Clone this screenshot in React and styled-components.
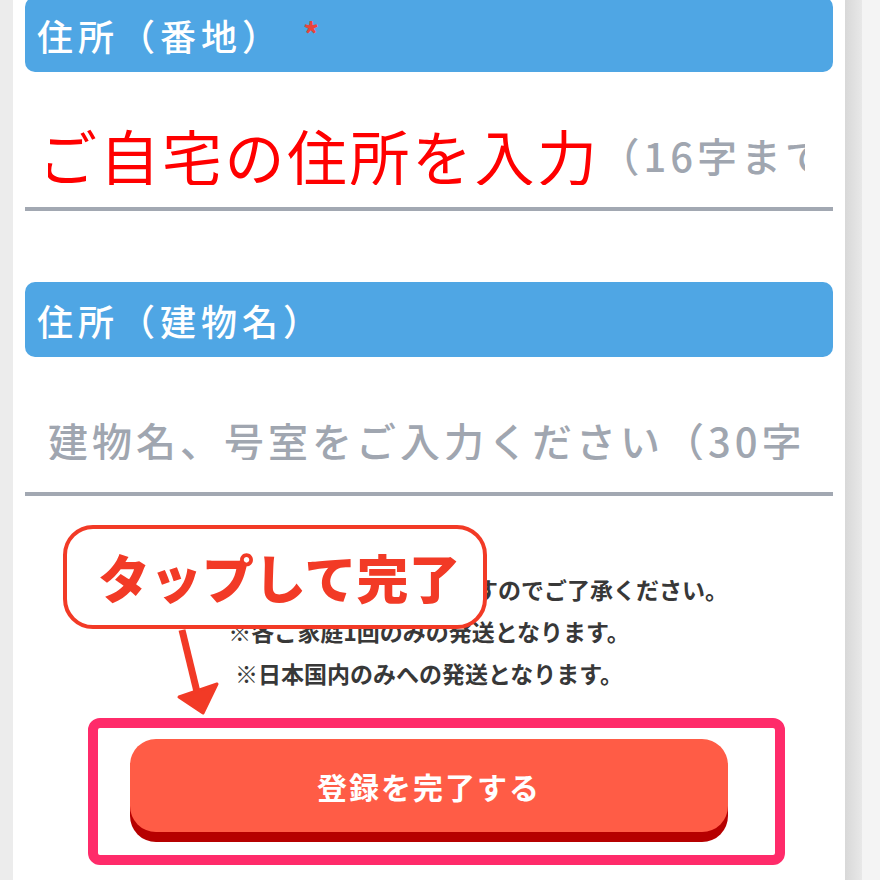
import React from 'react'
import styled, { createGlobalStyle } from 'styled-components'

const GlobalStyle = createGlobalStyle`
  html, body {
    margin: 0;
    padding: 0;
    background: #f4f4f4;
  }
  body {
    font-family: "Noto Sans CJK JP", "Noto Sans", sans-serif;
  }
`

const Page = styled.div`
  display: flex;
  height: 880px;
  overflow: hidden;
`

const Gutter = styled.div`
  width: 13px;
  background: #ececec;
`

const Edge = styled.div`
  width: 17px;
  background: linear-gradient(90deg, #d8d8d8, #e8e8e8);
`

const Rest = styled.div`
  flex: 1;
  background: #f4f4f4;
`

const Panel = styled.div`
  position: relative;
  width: 832px;
  box-sizing: border-box;
  padding: 0 12px;
  background: #fff;
`

const SectionLabel = styled.div`
  display: flex;
  align-items: center;
  height: 75px;
  margin-top: ${p => p.$offset}px;
  padding-left: 12px;
  border-radius: 10px;
  background: #4fa6e4;
  color: #fff;
  font-size: 36px;
  font-weight: 500;
  letter-spacing: 5px;
  line-height: 1;
`

const Required = styled.span`
  align-self: flex-start;
  margin-top: 20px;
  margin-left: 20px;
  color: #e8453c;
  font-size: 32px;
  font-weight: 700;
`

const Field = styled.div`
  display: flex;
  align-items: center;
  box-sizing: border-box;
  height: 139px;
  padding: 30px 28px 0 23px;
  border-bottom: 4px solid #a2a8b2;
`

const Clip = styled.div`
  display: flex;
  align-items: center;
  flex: 1;
  min-width: 0;
  overflow: hidden;
  white-space: nowrap;
`

const Placeholder = styled.span`
  color: #a0a6b0;
  font-size: 40px;
  font-weight: 500;
  letter-spacing: 4px;
  line-height: 1;
`

const Annotation = styled.span`
  margin-left: -11px;
  background: #fff;
  color: #ff0000;
  font-size: 60px;
  font-weight: 400;
  letter-spacing: 2.5px;
  line-height: 1;
`

const Notes = styled.div`
  margin-top: 72px;
  color: #383838;
  font-size: 23px;
  font-weight: 700;
  line-height: 42px;
  text-align: center;
`

const Highlight = styled.div`
  width: 697px;
  box-sizing: border-box;
  margin: 24px 0 0 63px;
  padding: 11px 0 23px 32px;
  border: 10px solid #ff2b6a;
  border-radius: 12px;
`

const SubmitButton = styled.button`
  display: flex;
  align-items: center;
  justify-content: center;
  width: 598px;
  height: 93px;
  padding: 0;
  border: none;
  border-radius: 26px;
  background: #ff5c46;
  box-shadow: 0 10px 0 #b60000;
  color: #fff;
  font-family: inherit;
  font-size: 30px;
  font-weight: 700;
  letter-spacing: 2px;
`

const Bubble = styled.div`
  position: absolute;
  left: 50px;
  top: 525px;
  display: flex;
  align-items: center;
  box-sizing: border-box;
  width: 424px;
  height: 104px;
  padding-left: 31px;
  border: 4px solid #f23a26;
  border-radius: 30px;
  background: #fff;
  color: #f23a26;
  font-size: 52px;
  font-weight: 900;
  line-height: 1;
  white-space: nowrap;
`

const Arrow = styled.svg`
  position: absolute;
  left: 157px;
  top: 626px;
`

export default function App() {
  return (
    <>
      <GlobalStyle />
      <Page>
        <Gutter />
        <Panel>
          <SectionLabel $offset={-3}>
            住所（番地）<Required>*</Required>
          </SectionLabel>
          <Field>
            <Clip>
              <Annotation>ご自宅の住所を入力</Annotation>
              <Placeholder>（16字まで）</Placeholder>
            </Clip>
          </Field>

          <SectionLabel $offset={71}>住所（建物名）</SectionLabel>
          <Field>
            <Clip>
              <Placeholder>建物名、号室をご入力ください（30字まで）</Placeholder>
            </Clip>
          </Field>

          <Notes>
            <div>※お届けが遅れる場合がございますのでご了承ください。</div>
            <div>※各ご家庭1回のみの発送となります。</div>
            <div>※日本国内のみへの発送となります。</div>
          </Notes>

          <Highlight>
            <SubmitButton type="button">登録を完了する</SubmitButton>
          </Highlight>

          <Bubble>タップして完了</Bubble>
          <Arrow width="60" height="92" viewBox="0 0 60 92">
            <line x1="12" y1="4" x2="28" y2="70" stroke="#f23a26" strokeWidth="7" />
            <polygon
              points="9,71 47,58 33,87"
              fill="#f23a26"
              stroke="#f23a26"
              strokeWidth="3"
              strokeLinejoin="round"
            />
          </Arrow>
        </Panel>
        <Edge />
        <Rest />
      </Page>
    </>
  )
}
